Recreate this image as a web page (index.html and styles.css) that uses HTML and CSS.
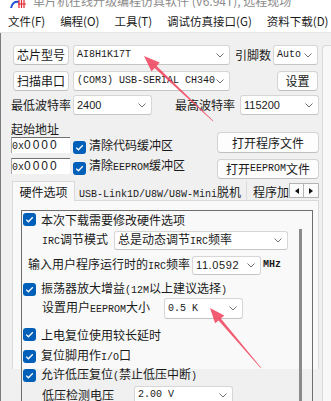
FILE: index.html
```html
<!DOCTYPE html>
<html>
<head>
<meta charset="utf-8">
<title>STC-ISP</title>
<link rel="stylesheet" href="styles.css">
</head>
<body>

<div class="titlebar">
  <svg class="app-icon" viewBox="0 0 16 8">
    <path d="M1 8 C2 3 5 1 9 2" stroke="#1f4fd1" stroke-width="2" fill="none"/>
    <path d="M9 0v8M11.5 0v8M14 0v8M8 4h8" stroke="#e0262e" stroke-width="1.2"/>
  </svg>
  <span class="title-text">单片机在线升级编程仿真软件 (V6.94T), 远程现场</span>
</div>

<div class="menubar">
  <span class="menu-item">文件(F)</span>
  <span class="menu-item">编程(O)</span>
  <span class="menu-item">工具(T)</span>
  <span class="menu-item">调试仿真接口(G)</span>
  <span class="menu-item">资料下载(D)</span>
</div>

<div class="window">
  <div class="main">

    <div class="row row-chip">
      <button class="btn btn-side">芯片型号</button>
      <div class="combo combo-wide"><span class="mono">AI8H1K17T</span><svg class="chev" viewBox="0 0 8 5"><path d="M.5 .5 4 4 7.5 .5"/></svg></div>
      <span class="pins">引脚数</span>
      <div class="combo combo-auto"><span class="mono">Auto</span><svg class="chev" viewBox="0 0 8 5"><path d="M.5 .5 4 4 7.5 .5"/></svg></div>
    </div>

    <div class="row row-port">
      <button class="btn btn-side">扫描串口</button>
      <div class="combo combo-wide"><span class="mono">(COM3) USB-SERIAL CH340</span><svg class="chev" viewBox="0 0 8 5"><path d="M.5 .5 4 4 7.5 .5"/></svg></div>
      <button class="btn btn-set">设置</button>
    </div>

    <div class="row row-baud">
      <span class="baud-label">最低波特率</span>
      <div class="combo combo-baud"><span class="num">2400</span><svg class="chev" viewBox="0 0 8 5"><path d="M.5 .5 4 4 7.5 .5"/></svg></div>
      <span class="baud-label baud-max">最高波特率</span>
      <div class="combo combo-baud"><span class="num">115200</span><svg class="chev" viewBox="0 0 8 5"><path d="M.5 .5 4 4 7.5 .5"/></svg></div>
    </div>

    <div class="addr">
      <div class="addr-left">
        <div class="addr-label">起始地址</div>
        <div class="addr-row">
          <div class="hex"><span class="mono">0x</span>0000</div>
          <span class="cb"><svg viewBox="0 0 13 13"><path d="M3.2 6.6 5.4 8.8 9.8 4.2"/></svg></span>
          <span class="cb-text">清除代码缓冲区</span>
        </div>
        <div class="addr-row addr-row2">
          <div class="hex"><span class="mono">0x</span>0000</div>
          <span class="cb"><svg viewBox="0 0 13 13"><path d="M3.2 6.6 5.4 8.8 9.8 4.2"/></svg></span>
          <span class="cb-text">清除<span class="mono">EEPROM</span>缓冲区</span>
        </div>
      </div>
      <div class="addr-right">
        <button class="btn btn-open">打开程序文件</button>
        <button class="btn btn-open btn-open2">打开<span class="mono">EEPROM</span>文件</button>
      </div>
    </div>

    <div class="tabs">
      <div class="tab-list">
        <span class="tab tab-active">硬件选项</span>
        <span class="tab"><span class="mono">USB-Link1D/U8W/U8W-Mini</span>脱机</span>
        <span class="tab tab-last">程序加载</span>
      </div>
      <div class="tab-arrows">
        <span class="arrow-btn"><svg viewBox="0 0 4 6"><path d="M4 0v6L0 3z"/></svg></span>
        <span class="arrow-btn"><svg viewBox="0 0 4 6"><path d="M0 0v6l4-3z"/></svg></span>
      </div>
    </div>

    <div class="panel">
      <div class="group">
        <div class="group-body">

          <div class="opt opt-1">
            <span class="cb"><svg viewBox="0 0 13 13"><path d="M3.2 6.6 5.4 8.8 9.8 4.2"/></svg></span>
            <span class="cb-text">本次下载需要修改硬件选项</span>
          </div>

          <div class="field field-irc">
            <span class="lbl lbl-irc"><span class="mono">IRC</span>调节模式</span>
            <div class="combo combo-irc"><span>总是动态调节<span class="mono">IRC</span>频率</span><svg class="chev" viewBox="0 0 8 5"><path d="M.5 .5 4 4 7.5 .5"/></svg></div>
          </div>

          <div class="field field-freq">
            <span class="lbl lbl-freq">输入用户程序运行时的<span class="mono">IRC</span>频率</span>
            <div class="combo combo-freq"><span class="num num-wide">11.0592</span><svg class="chev" viewBox="0 0 8 5"><path d="M.5 .5 4 4 7.5 .5"/></svg></div>
            <span class="mono mhz">MHz</span>
          </div>

          <div class="opt opt-2">
            <span class="cb"><svg viewBox="0 0 13 13"><path d="M3.2 6.6 5.4 8.8 9.8 4.2"/></svg></span>
            <span class="cb-text">振荡器放大增益<span class="mono">(12M</span>以上建议选择<span class="mono">)</span></span>
          </div>

          <div class="field field-eeprom">
            <span class="lbl lbl-eeprom">设置用户<span class="mono">EEPROM</span>大小</span>
            <div class="combo combo-eeprom"><span class="mono">0.5 K</span><svg class="chev" viewBox="0 0 8 5"><path d="M.5 .5 4 4 7.5 .5"/></svg></div>
          </div>

          <div class="opt opt-3">
            <span class="cb"><svg viewBox="0 0 13 13"><path d="M3.2 6.6 5.4 8.8 9.8 4.2"/></svg></span>
            <span class="cb-text">上电复位使用较长延时</span>
          </div>

          <div class="opt opt-4">
            <span class="cb"><svg viewBox="0 0 13 13"><path d="M3.2 6.6 5.4 8.8 9.8 4.2"/></svg></span>
            <span class="cb-text">复位脚用作<span class="mono">I/O</span>口</span>
          </div>

          <div class="opt opt-5">
            <span class="cb"><svg viewBox="0 0 13 13"><path d="M3.2 6.6 5.4 8.8 9.8 4.2"/></svg></span>
            <span class="cb-text">允许低压复位<span class="mono">(</span>禁止低压中断<span class="mono">)</span></span>
          </div>

          <div class="field field-lvd">
            <span class="lbl lbl-lvd">低压检测电压</span>
            <div class="combo combo-lvd"><span class="mono">2.00 V</span><svg class="chev" viewBox="0 0 8 5"><path d="M.5 .5 4 4 7.5 .5"/></svg></div>
          </div>

        </div>
        <div class="scroll"><div class="thumb"></div></div>
      </div>
    </div>

  </div>
  <div class="side"></div>
</div>

<svg class="marks" viewBox="0 0 331 401">
  <polygon points="144,56 159.7,62.6 156.6,65.9 213.2,120.8 212.8,121.2 154.6,68.1 151.5,71.4"/>
  <polygon points="210,308 224.3,315.5 220.8,318.4 261.2,367.8 260.8,368.2 218.6,320.4 215.1,323.3"/>
</svg>

</body>
</html>
```

FILE: styles.css
```css
/* Base */
* {
  box-sizing: border-box;
}

html,
body {
  margin: 0;
}

body {
  position: relative;
  width: 331px;
  height: 401px;
  overflow: hidden;
  background: #f0f0f0;
  color: #1a1a1a;
  font-family: "Noto Sans CJK SC", "Noto Sans", sans-serif;
  font-size: 12px;
  line-height: 16px;
}

.mono {
  font-family: "Liberation Mono", monospace;
  font-size: 10px;
}

.num {
  font-family: "Liberation Sans", sans-serif;
  font-size: 11px;
}

/* Title and menu */
.titlebar {
  display: flex;
  height: 10px;
  overflow: hidden;
  background: #fff;
}

.app-icon {
  width: 16px;
  height: 8px;
  margin-left: 10px;
}

.title-text {
  margin: -6px 0 0 7px;
  color: #8a8a8a;
  line-height: 14px;
  white-space: nowrap;
}

.menubar {
  display: flex;
  align-items: center;
  height: 23px;
  padding-left: 8px;
  background: #fff;
  border-bottom: 1px solid #e6e6e6;
  font-size: 11.5px;
  white-space: nowrap;
}

.menu-item {
  margin-right: 15px;
}

/* Window body */
.window {
  display: flex;
  height: 368px;
  box-shadow: inset 1px 0 #7c7c7c;
}

.main {
  width: 322px;
  flex: none;
}

.side {
  flex: 1;
  margin-top: 12px;
  background: #f8f8f8;
  border-left: 1px solid #dadada;
  border-top: 1px solid #dadada;
  border-top-left-radius: 4px;
}

/* Controls */
.btn {
  display: flex;
  align-items: center;
  justify-content: center;
  height: 20px;
  padding: 0;
  background: #fdfdfd;
  border: 1px solid #d3d3d3;
  border-bottom-color: #bfbfbf;
  border-radius: 4px;
  color: inherit;
  font: inherit;
  white-space: nowrap;
}

.combo {
  display: flex;
  align-items: center;
  justify-content: space-between;
  height: 20px;
  padding: 0 5px 0 3px;
  background: #fff;
  border: 1px solid #d6d6d6;
  border-bottom-color: #c4c4c4;
  border-radius: 3px;
  white-space: nowrap;
  overflow: hidden;
}

.chev {
  flex: none;
  width: 8px;
  height: 5px;
  fill: none;
  stroke: #707070;
  stroke-width: 1;
}

.cb {
  display: flex;
  flex: none;
  width: 13px;
  height: 13px;
  background: #005fb8;
  border-radius: 3px;
}

.cb svg {
  width: 13px;
  height: 13px;
  fill: none;
  stroke: #fff;
  stroke-width: 1.3;
}

.cb-text {
  margin-left: 5px;
  white-space: nowrap;
}

/* Top rows */
.row {
  display: flex;
  align-items: center;
  height: 20px;
}

.row > * {
  flex: none;
}

.row-chip {
  margin-top: 12px;
  padding-left: 13px;
}

.row-port {
  margin-top: 6px;
  padding-left: 13px;
}

.row-baud {
  margin-top: 4px;
  padding-left: 11px;
}

.btn-side {
  width: 56px;
  margin-right: 4px;
}

.combo-wide {
  width: 157px;
}

.pins {
  width: 36px;
  margin: 0 2px 0 5px;
}

.combo-auto {
  width: 45px;
}

.btn-set {
  width: 41px;
  margin-left: 47px;
}

.baud-label {
  width: 62px;
}

.baud-max {
  margin-left: 23px;
  width: 65px;
}

.combo-baud {
  width: 79px;
}

/* Address block */
.addr {
  display: flex;
  height: 62px;
  margin-top: 2px;
}

.addr-left {
  width: 217px;
  padding-left: 11px;
}

.addr-label {
  height: 16px;
  margin-top: 4px;
}

.addr-row {
  display: flex;
  align-items: center;
  height: 16px;
}

.addr-row2 {
  margin-top: 5px;
}

.addr-row .cb {
  margin: 4px 0 0 3px;
}

.addr-row .cb-text {
  margin-left: 3px;
}

.hex {
  flex: none;
  width: 59px;
  height: 16px;
  background: #fff;
  border-top: 1px solid #707070;
  border-left: 1px solid #a8a8a8;
  font-family: "Liberation Sans", sans-serif;
  font-size: 12px;
  letter-spacing: 2px;
  line-height: 15px;
}

.hex .mono {
  letter-spacing: 0;
}

.addr-right {
  width: 102px;
}

.btn-open {
  width: 102px;
  height: 21px;
  margin-top: 15px;
}

.btn-open2 {
  height: 20px;
  margin-top: 6px;
}

/* Tabs */
.tabs {
  display: flex;
  align-items: flex-start;
  width: 307px;
  height: 19px;
  margin: 2px 0 0 12px;
}

.tab-list {
  display: flex;
  flex: 1;
  height: 20px;
  overflow: hidden;
  white-space: nowrap;
}

.tab {
  flex: none;
  height: 19px;
  padding: 2px 5px 0 4px;
  line-height: 17px;
  border-right: 1px solid #dcdcdc;
}

.tab-active {
  position: relative;
  z-index: 1;
  width: 63px;
  height: 20px;
  padding: 1px 0 0;
  text-align: center;
  background: #f9f9f9;
  border: 1px solid #d9d9d9;
  border-bottom: none;
}

.tab-last {
  padding-left: 6px;
  border-right: none;
}

.tab-arrows {
  display: flex;
  flex: none;
  margin-top: 2px;
}

.arrow-btn {
  display: flex;
  align-items: center;
  justify-content: center;
  width: 15px;
  height: 15px;
  background: #fbfbfb;
  border: 1px solid #b4b4b4;
}

.arrow-btn + .arrow-btn {
  border-left: none;
}

.arrow-btn svg {
  width: 4px;
  height: 6px;
  fill: #111;
}

/* Tab panel */
.panel {
  width: 307px;
  height: 169px;
  margin-left: 12px;
  padding: 9px 5px 0 8px;
  background: #f9f9f9;
  border: 1px solid #d9d9d9;
  border-bottom: none;
}

.group {
  display: flex;
  height: 200px;
  border: 1px solid #6e6e6e;
  border-bottom: none;
}

.group-body {
  flex: 1;
  padding: 1px 0 0 1px;
}

.scroll {
  width: 16px;
  flex: none;
}

.thumb {
  width: 3px;
  height: 190px;
  margin: 18px 0 0 3px;
  background: #8a8a8a;
}

.opt {
  display: flex;
  align-items: center;
  height: 15px;
}

.opt-1 { margin-top: 0; }
.opt-2 { margin-top: 7px; }
.opt-3 { margin-top: 8px; }
.opt-4 { margin-top: 7px; }
.opt-5 { margin-top: 4px; }

.field {
  display: flex;
  align-items: center;
  height: 20px;
  padding-left: 19px;
  white-space: nowrap;
}

.field > * {
  flex: none;
}

.field .combo {
  height: 19px;
}

.field-irc { margin-top: 3px; }

.field-freq {
  margin-top: 5px;
  padding-left: 5px;
}

.field-eeprom {
  height: 21px;
  margin-top: 1px;
}

.field-eeprom .combo {
  height: 21px;
}

.field-lvd {
  margin-top: 2px;
}

.lbl-irc { width: 72px; }
.lbl-freq { width: 164px; }
.lbl-eeprom { width: 122px; }
.lbl-lvd { width: 92px; }

.combo-irc { width: 174px; }
.combo-freq { width: 69px; }
.combo-eeprom { width: 79px; }
.combo-lvd { width: 99px; }

.num-wide {
  letter-spacing: 0.6px;
}

.mhz {
  margin-left: 2px;
  font-weight: bold;
}

/* Red arrows drawn over the window */
.marks {
  position: absolute;
  top: 0;
  left: 0;
  width: 331px;
  height: 401px;
  pointer-events: none;
}

.marks polygon {
  fill: #f0455f;
  opacity: 0.88;
}
```
